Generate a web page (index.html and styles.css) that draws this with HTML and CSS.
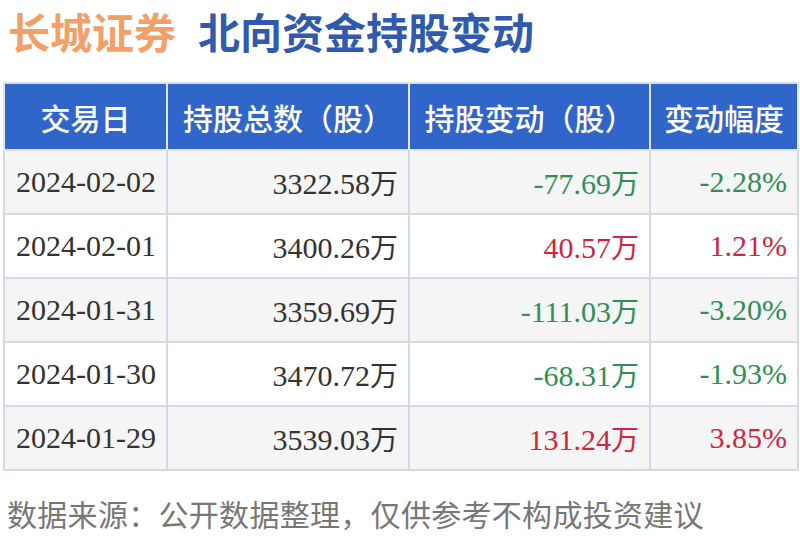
FILE: index.html
```html
<!DOCTYPE html>
<html lang="zh-CN">
<head>
<meta charset="utf-8">
<title>长城证券 北向资金持股变动</title>
<link rel="stylesheet" href="styles.css">
</head>
<body>
<div class="page">
  <h1 class="title"><span class="brand">长城证券</span><span class="topic">北向资金持股变动</span></h1>
  <table class="data">
    <colgroup>
      <col class="c1"><col class="c2"><col class="c3"><col class="c4">
    </colgroup>
    <thead>
      <tr><th>交易日</th><th>持股总数（股）</th><th>持股变动（股）</th><th>变动幅度</th></tr>
    </thead>
    <tbody>
      <tr class="shade"><td class="date">2024-02-02</td><td class="num">3322.58<span class="u">万</span></td><td class="num down">-77.69<span class="u">万</span></td><td class="num down">-2.28%</td></tr>
      <tr><td class="date">2024-02-01</td><td class="num">3400.26<span class="u">万</span></td><td class="num up">40.57<span class="u">万</span></td><td class="num up">1.21%</td></tr>
      <tr class="shade"><td class="date">2024-01-31</td><td class="num">3359.69<span class="u">万</span></td><td class="num down">-111.03<span class="u">万</span></td><td class="num down">-3.20%</td></tr>
      <tr><td class="date">2024-01-30</td><td class="num">3470.72<span class="u">万</span></td><td class="num down">-68.31<span class="u">万</span></td><td class="num down">-1.93%</td></tr>
      <tr class="shade"><td class="date">2024-01-29</td><td class="num">3539.03<span class="u">万</span></td><td class="num up">131.24<span class="u">万</span></td><td class="num up">3.85%</td></tr>
    </tbody>
  </table>
  <p class="note">数据来源：公开数据整理，仅供参考不构成投资建议</p>
</div>
</body>
</html>
```

FILE: styles.css
```css
html, body {
  margin: 0;
  padding: 0;
  background: #ffffff;
}
.page {
  width: 800px;
  padding: 0 3px;
  box-sizing: border-box;
}
.title {
  margin: 0;
  padding: 1px 0 0 5px;
  height: 82px;
  box-sizing: border-box;
  font-family: "Noto Sans CJK SC", "Noto Sans", sans-serif;
  font-size: 42px;
  line-height: 60px;
  font-weight: 700;
  display: flex;
  align-items: flex-start;
  gap: 22px;
}
.brand { color: #f2a067; }
.topic { color: #2f5aad; }
.data {
  width: 794px;
  border-collapse: collapse;
  table-layout: fixed;
  border: 2px solid #d5dce6;
}
.c1 { width: 163px; }
.c2 { width: 242px; }
.c3 { width: 241px; }
.c4 { width: 148px; }
.data th {
  height: 65px;
  padding: 0;
  background: #3065ca;
  color: #ffffff;
  font-family: "Noto Sans CJK SC", "Noto Sans", sans-serif;
  font-size: 30px;
  font-weight: 500;
  text-align: center;
  border: 2px solid #dfe6ef;
  border-top-color: #d5dce6;
}
.data td {
  height: 62px;
  padding: 0 10px;
  border: 2px solid #d2dae5;
  font-family: "Liberation Serif", "Noto Sans CJK SC", serif;
  font-size: 30px;
  color: #333333;
  white-space: nowrap;
}
.data tr.shade td { background: #f5f5f5; }
.data td.date { text-align: left; padding-left: 11px; }
.data td.num { text-align: right; }
.u {
  font-family: "Noto Sans CJK SC", sans-serif;
  font-size: 28px;
}
.down { color: #2f8f55 !important; }
.up { color: #cf2640 !important; }
.note {
  margin: 20px 0 0 4px;
  font-family: "Noto Sans CJK SC", "Noto Sans", sans-serif;
  font-size: 30px;
  line-height: 44px;
  letter-spacing: 0.3px;
  color: #777777;
}
```
